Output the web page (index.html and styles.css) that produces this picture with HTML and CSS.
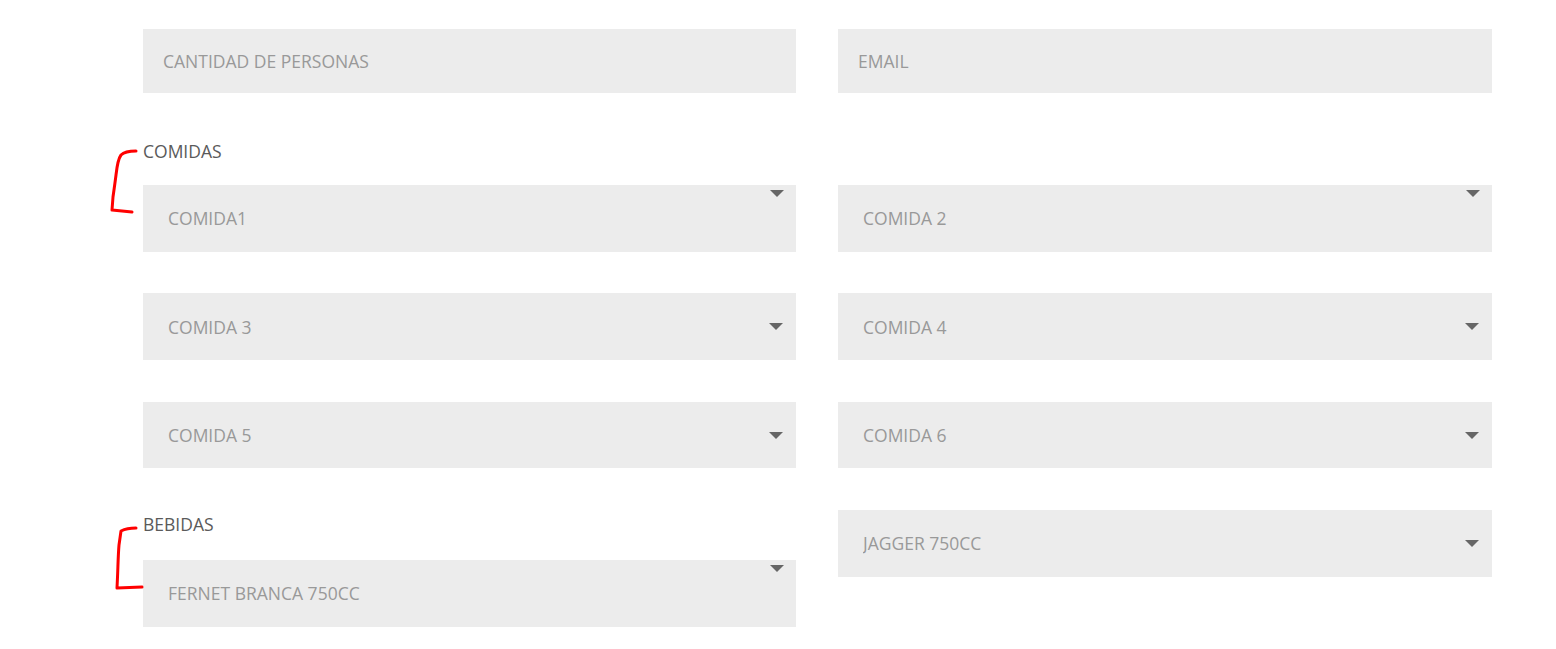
FILE: index.html
```html
<!DOCTYPE html>
<html lang="es">
<head>
    <meta charset="UTF-8">
    <meta name="viewport" content="width=device-width, initial-scale=1.0">
    <title>Pedido</title>
    <link rel="stylesheet" href="styles.css">
</head>
<body>
    <form class="order">
        <div class="grid">
            <input class="field" type="text" placeholder="CANTIDAD DE PERSONAS">
            <input class="field" type="email" placeholder="EMAIL">
        </div>

        <p class="section-label comidas">COMIDAS</p>

        <div class="grid selects">
            <div class="select-wrap">
                <select class="select"><option>COMIDA1</option></select>
                <span class="arrow arrow-top"></span>
            </div>
            <div class="select-wrap">
                <select class="select"><option>COMIDA 2</option></select>
                <span class="arrow arrow-top"></span>
            </div>
            <div class="select-wrap">
                <select class="select"><option>COMIDA 3</option></select>
                <span class="arrow"></span>
            </div>
            <div class="select-wrap">
                <select class="select"><option>COMIDA 4</option></select>
                <span class="arrow"></span>
            </div>
            <div class="select-wrap">
                <select class="select"><option>COMIDA 5</option></select>
                <span class="arrow"></span>
            </div>
            <div class="select-wrap">
                <select class="select"><option>COMIDA 6</option></select>
                <span class="arrow"></span>
            </div>

            <!-- Bebidas -->
            <div class="cell">
                <p class="section-label bebidas">BEBIDAS</p>
                <div class="select-wrap">
                    <select class="select"><option>FERNET BRANCA 750CC</option></select>
                    <span class="arrow arrow-top"></span>
                </div>
            </div>
            <div class="cell">
                <div class="select-wrap">
                    <select class="select"><option>JAGGER 750CC</option></select>
                    <span class="arrow"></span>
                </div>
            </div>
        </div>
    </form>

    <!-- hand drawn marks -->
    <svg class="marks" width="1556" height="649" viewBox="0 0 1556 649">
        <path d="M136 151 C129 151 124 152 121 155 C118 159 117 166 116 175 C115 183 114 190 113 197 L112 210 L132 212" />
        <path d="M136 528 C130 528 125 529 121 531 L119 545 C118 556 118 570 117 588 L142 587" />
    </svg>
</body>
</html>
```

FILE: styles.css
```css
/* Basic Styling */
body {
    margin: 0;
    font-family: "Open Sans", "Liberation Sans", sans-serif;
    background-color: #fff;
}

.order {
    padding: 29px 0 0 143px;
}

.grid {
    display: grid;
    grid-template-columns: 653px 654px;
    column-gap: 42px;
}

.selects {
    row-gap: 41.7px;
}

/* Text fields */
.field {
    height: 64px;
    padding: 0 20px;
    border: none;
    background-color: #ececec;
    font-family: inherit;
    font-size: 17.5px;
    color: #777;
    outline: none;
}

.field::placeholder {
    color: #999;
}

/* Section titles */
.section-label {
    margin: 46px 0 22px;
    font-size: 17.5px;
    line-height: 24px;
    color: #5a5a5a;
}

.section-label.bebidas {
    margin: 2px 0 24px;
}

/* Selects */
.select-wrap {
    position: relative;
    height: 66.7px;
}

.select {
    appearance: none;
    -webkit-appearance: none;
    width: 100%;
    height: 100%;
    padding: 0 25px;
    border: none;
    border-radius: 0;
    background-color: #ececec;
    font-family: inherit;
    font-size: 17.5px;
    color: #999;
    outline: none;
}

.arrow {
    position: absolute;
    right: 13px;
    top: 30px;
    width: 0;
    height: 0;
    border-left: 7px solid transparent;
    border-right: 7px solid transparent;
    border-top: 7px solid #666;
    pointer-events: none;
}

.arrow-top {
    top: 5px;
    right: 12px;
}

/* Red marks */
.marks {
    position: absolute;
    left: 0;
    top: 0;
    pointer-events: none;
}

.marks path {
    fill: none;
    stroke: #f00;
    stroke-width: 3;
    stroke-linecap: round;
    stroke-linejoin: round;
}
```
